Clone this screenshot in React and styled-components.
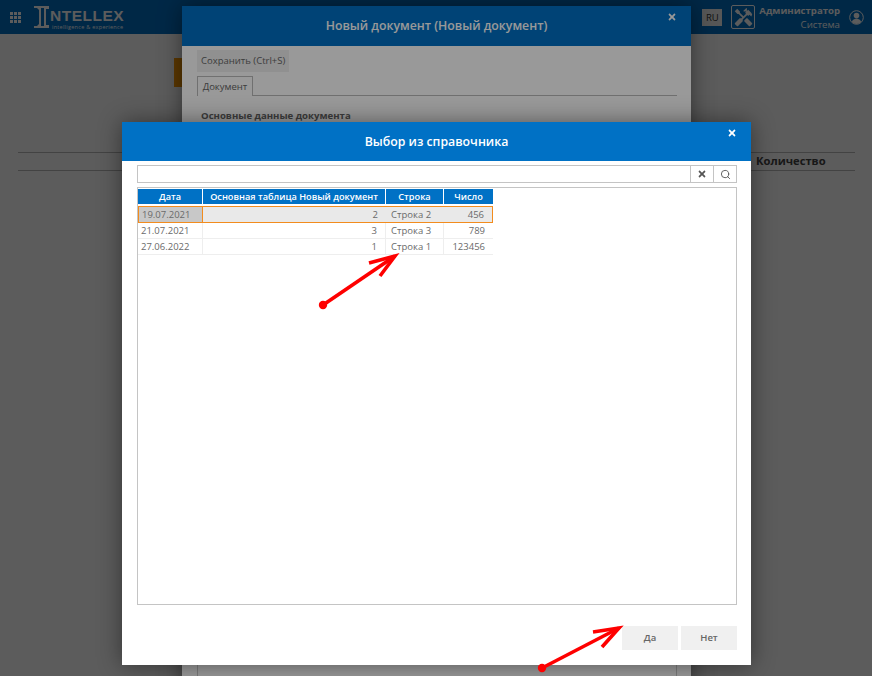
// App.jsx
import React from 'react';
import styled, { createGlobalStyle } from 'styled-components';
import { FaTimes } from 'react-icons/fa';
import { MdHandyman } from 'react-icons/md';
import { FiSearch } from 'react-icons/fi';

const GlobalStyle = createGlobalStyle`
  html, body {
    margin: 0;
    height: 100%;
    overflow: hidden;
    background: #fff;
    font-family: 'Open Sans', 'Liberation Sans', sans-serif;
    color: #333;
  }
  * { box-sizing: border-box; }
`;

const Page = styled.div`
  position: relative;
  width: 872px;
  height: 676px;
  overflow: hidden;
  background: #fff;
`;

const Header = styled.header`
  height: 34px;
  background: #0071c5;
  display: flex;
  align-items: center;
  color: #fff;
`;

const AppsGrid = styled.div`
  display: grid;
  grid-template-columns: repeat(3, 3px);
  grid-auto-rows: 3px;
  gap: 1px;
  margin-left: 10px;
  margin-right: 12px;
  span { background: #fff; }
`;

const Logo = styled.div`
  display: flex;
  align-items: flex-start;
  height: 24px;
  svg { display: block; }
`;

const LogoText = styled.div`
  margin-left: -2px;
  display: flex;
  flex-direction: column;
`;

const LogoName = styled.span`
  font-family: 'Liberation Sans', sans-serif;
  font-size: 15.5px;
  line-height: 17px;
  margin-top: 2px;
  font-weight: 700;
  letter-spacing: 0.5px;
`;

const LogoTag = styled.span`
  font-size: 5.5px;
  line-height: 5px;
  margin: 1px 0 0 2px;
  letter-spacing: 0.28px;
  white-space: nowrap;
`;

const HeaderRight = styled.div`
  margin-left: auto;
  display: flex;
  align-items: center;
  padding-right: 8px;
`;

const Lang = styled.div`
  width: 20px;
  height: 17px;
  background: #f2f2f2;
  color: #333;
  font-size: 9.5px;
  line-height: 17px;
  text-align: center;
  margin-right: 9px;
`;

const Tools = styled.div`
  width: 24px;
  height: 24px;
  border: 1px solid #fff;
  border-radius: 2px;
  display: flex;
  align-items: center;
  justify-content: center;
  margin-right: 4px;
`;

const UserBlock = styled.div`
  text-align: right;
  margin-right: 9px;
`;

const UserName = styled.div`
  font-size: 9.6px;
  font-weight: 700;
  line-height: 13px;
`;

const UserRole = styled.div`
  font-size: 9.7px;
  line-height: 13px;
  margin-top: 1px;
`;

const Orange = styled.div`
  width: 40px;
  height: 29px;
  margin: 24px 0 0 174px;
  background: #ff9c00;
`;

const GridHead = styled.div`
  margin: 65px 17px 0 18px;
  height: 19px;
  border-top: 1px solid #bbb;
  border-bottom: 1px solid #bbb;
  padding-left: 738px;
  font-size: 11.2px;
  font-weight: 700;
  line-height: 16px;
  color: #444;
`;

const Overlay = styled.div`
  position: absolute;
  inset: 0;
  background: rgba(0, 0, 0, 0.4);
`;

const Modal = styled.div`
  position: absolute;
  left: ${(p) => p.$left}px;
  top: ${(p) => p.$top}px;
  width: ${(p) => p.$width}px;
  height: ${(p) => p.$height}px;
  background: #fff;
  box-shadow: 0 0 22px rgba(0, 0, 0, 0.45);
  display: flex;
  flex-direction: column;
`;

const ModalHeader = styled.div`
  position: relative;
  flex: none;
  height: ${(p) => p.$height}px;
  padding-bottom: 1px;
  background: #0071c5;
  color: #fff;
  display: flex;
  align-items: center;
  justify-content: center;
  font-size: 12.3px;
  font-weight: 600;
`;

const Close = styled.span`
  position: absolute;
  top: 6px;
  right: 14px;
  display: flex;
  font-size: 10px;
`;

const DocBody = styled.div`
  flex: 1;
  padding: 4px 14px 0 15px;
  display: flex;
  flex-direction: column;
`;

const SaveButton = styled.div`
  align-self: flex-start;
  height: 22px;
  padding: 0 4px;
  background: #f0f0f0;
  font-size: 9.5px;
  line-height: 22px;
  color: #666;
`;

const TabStrip = styled.div`
  margin-top: 4px;
  height: 20px;
  border-bottom: 1px solid #bbb;
`;

const Tab = styled.div`
  width: 56px;
  height: 20px;
  background: #fff;
  border: 1px solid #bbb;
  border-bottom: none;
  font-size: 9.5px;
  line-height: 20px;
  text-align: center;
  color: #666;
`;

const SectionTitle = styled.div`
  margin: 13px 0 0 4px;
  font-size: 9.6px;
  font-weight: 700;
  line-height: 13px;
  color: #666;
`;

const Panel = styled.div`
  flex: 1;
  margin-top: 6px;
  border-left: 1px solid #ccc;
  border-right: 1px solid #ccc;
`;

const PickBody = styled.div`
  flex: 1;
  padding: 4px 14px 15px 15px;
  display: flex;
  flex-direction: column;
`;

const SearchBar = styled.div`
  flex: none;
  height: 18px;
  border: 1px solid #c4c4c4;
  display: flex;
`;

const SearchInput = styled.div`
  flex: 1;
`;

const SearchButton = styled.div`
  width: 23px;
  border-left: 1px solid #c4c4c4;
  display: flex;
  align-items: center;
  justify-content: center;
  color: #555;
`;

const Frame = styled.div`
  flex: none;
  height: 418px;
  margin-top: 4px;
  border: 1px solid #c4c4c4;
  padding-top: 1px;
`;

const Table = styled.table`
  border-collapse: separate;
  border-spacing: 0;
  table-layout: fixed;
  width: 355px;
  font-size: 9.5px;
  color: #6a6a6a;
`;

const Th = styled.th`
  height: 16px;
  padding: 0 0 1px;
  background: #0071c5;
  color: #fff;
  font-weight: 600;
  font-size: 9.2px;
  text-align: center;
  border-right: 1px solid #fff;
  border-bottom: 1px solid #fff;
  &:last-child { border-right: none; }
`;

const Td = styled.td`
  height: 16px;
  padding: 0 ${(p) => (p.$end ? 8 : 4)}px 1px ${(p) => (p.$start ? 3 : 5)}px;
  text-align: ${(p) => (p.$right ? 'right' : 'left')};
  white-space: nowrap;
  border-right: 1px solid #eee;
  border-bottom: 1px solid #eee;
  &:last-child { border-right: none; }
`;

const SelectedRow = styled.tr`
  td {
    height: 17px;
    background: #e9e9e9;
    color: #6a6a6a;
    border-top: 1px solid #f28c1e;
    border-bottom: 1px solid #f28c1e;
    border-right: none;
  }
  td:first-child {
    background: #c8c8c8;
    border-left: 1px solid #f28c1e;
    border-right: 1px solid #f28c1e;
  }
  td:last-child { border-right: 1px solid #f28c1e; }
`;

const Spacer = styled.tr`
  height: 1px;
`;

const Footer = styled.div`
  margin-top: auto;
  display: flex;
  justify-content: flex-end;
  gap: 3px;
`;

const DialogButton = styled.div`
  width: 56px;
  height: 24px;
  background: #f0f0f0;
  color: #666;
  font-size: 9.5px;
  font-weight: 600;
  line-height: 24px;
  text-align: center;
`;

const Annotations = styled.svg`
  position: absolute;
  inset: 0;
  pointer-events: none;
`;

const rows = [
  { date: '21.07.2021', id: 3, name: 'Строка 3', value: 789 },
  { date: '27.06.2022', id: 1, name: 'Строка 1', value: 123456 },
];

const Arrow = ({ from, tip, barbs }) => (
  <g stroke="#fe0000" fill="none" strokeWidth="3.6">
    <circle cx={from[0]} cy={from[1]} r="4.2" fill="#fe0000" stroke="none" />
    <line x1={from[0]} y1={from[1]} x2={tip[0]} y2={tip[1]} />
    <polyline points={`${barbs[0].join(',')} ${tip.join(',')} ${barbs[1].join(',')}`} />
  </g>
);

export default function App() {
  return (
    <Page>
      <GlobalStyle />
      <Header>
        <AppsGrid>
          {Array.from({ length: 9 }).map((_, i) => <span key={i} />)}
        </AppsGrid>
        <Logo>
          <svg width="19" height="24" viewBox="0 0 19 24">
            <path
              d="M1 1h15v3h-3v16h3v3H1v-2h3l2-2V5L4 3H1z M8 3v18h3V3z"
              fill="#fff"
              fillRule="evenodd"
            />
          </svg>
          <LogoText>
            <LogoName>NTELLEX</LogoName>
            <LogoTag>intelligence &amp; experience</LogoTag>
          </LogoText>
        </Logo>
        <HeaderRight>
          <Lang>RU</Lang>
          <Tools><MdHandyman size={21} color="#fff" /></Tools>
          <UserBlock>
            <UserName>Администратор</UserName>
            <UserRole>Система</UserRole>
          </UserBlock>
          <svg width="15" height="15" viewBox="0 0 15 15">
            <circle cx="7.5" cy="7.5" r="6.8" fill="none" stroke="#fff" />
            <circle cx="7.5" cy="5.6" r="2.8" fill="#fff" />
            <path d="M2.8 12c.6-2.400 2.600-3.200 4.700-3.200s4.100.8 4.700 3.200a6.500 6.500 0 0 1-9.400 0z" fill="#fff" />
          </svg>
        </HeaderRight>
      </Header>
      <Orange />
      <GridHead>Количество</GridHead>

      <Overlay />
      <Modal $left={182} $top={6} $width={509} $height={700}>
        <ModalHeader $height={40}>
          Новый документ (Новый документ)
          <Close><FaTimes /></Close>
        </ModalHeader>
        <DocBody>
          <SaveButton>Сохранить (Ctrl+S)</SaveButton>
          <TabStrip><Tab>Документ</Tab></TabStrip>
          <SectionTitle>Основные данные документа</SectionTitle>
          <Panel />
        </DocBody>
      </Modal>

      <Overlay />
      <Modal $left={122} $top={122} $width={629} $height={543}>
        <ModalHeader $height={39}>
          Выбор из справочника
          <Close><FaTimes /></Close>
        </ModalHeader>
        <PickBody>
          <SearchBar>
            <SearchInput />
            <SearchButton><FaTimes size={10} /></SearchButton>
            <SearchButton><FiSearch size={11} /></SearchButton>
          </SearchBar>
          <Frame>
            <Table>
              <colgroup>
                <col style={{ width: 65 }} />
                <col style={{ width: 183 }} />
                <col style={{ width: 58 }} />
                <col style={{ width: 49 }} />
              </colgroup>
              <thead>
                <tr>
                  <Th>Дата</Th>
                  <Th>Основная таблица Новый документ</Th>
                  <Th>Строка</Th>
                  <Th>Число</Th>
                </tr>
              </thead>
              <tbody>
                <Spacer />
                <SelectedRow>
                  <Td $start>19.07.2021</Td>
                  <Td $right $end>2</Td>
                  <Td>Строка 2</Td>
                  <Td $right $end>456</Td>
                </SelectedRow>
                {rows.map((row) => (
                  <tr key={row.id}>
                    <Td $start>{row.date}</Td>
                    <Td $right $end>{row.id}</Td>
                    <Td>{row.name}</Td>
                    <Td $right $end>{row.value}</Td>
                  </tr>
                ))}
              </tbody>
            </Table>
          </Frame>
          <Footer>
            <DialogButton>Да</DialogButton>
            <DialogButton>Нет</DialogButton>
          </Footer>
        </PickBody>
      </Modal>

      <Annotations width="872" height="676" viewBox="0 0 872 676">
        <Arrow from={[323, 305]} tip={[395, 256]} barbs={[[369, 263], [380, 276]]} />
        <Arrow from={[542, 668]} tip={[619, 628]} barbs={[[593, 632], [602, 647]]} />
      </Annotations>
    </Page>
  );
}
